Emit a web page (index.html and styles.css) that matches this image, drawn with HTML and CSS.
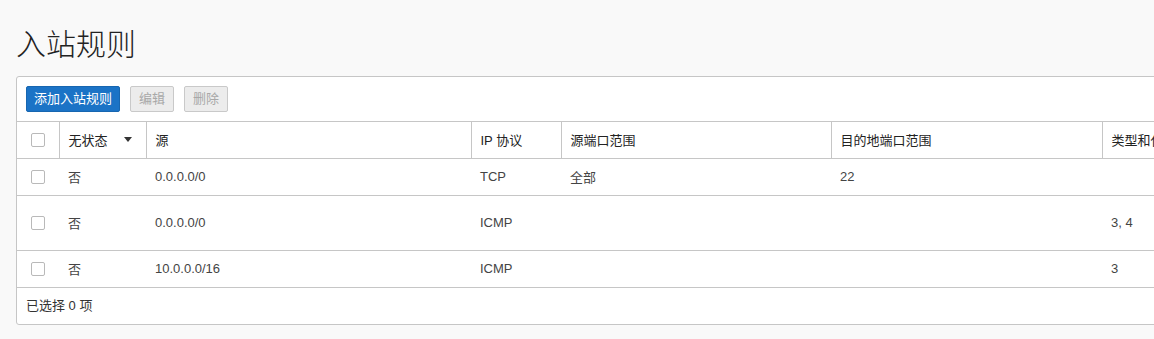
FILE: index.html
```html
<!DOCTYPE html>
<html lang="zh-CN">
<head>
<meta charset="utf-8">
<title>入站规则</title>
<link rel="stylesheet" href="styles.css">
</head>
<body>
<div class="page">
  <h1 class="title">入站规则</h1>
  <div class="panel">
    <div class="toolbar">
      <button class="btn btn-primary">添加入站规则</button>
      <button class="btn btn-disabled">编辑</button>
      <button class="btn btn-disabled">删除</button>
    </div>
    <table class="rules">
      <colgroup>
        <col class="c-check"><col class="c-state"><col class="c-src"><col class="c-proto"><col class="c-sport"><col class="c-dport"><col class="c-type">
      </colgroup>
      <thead>
        <tr>
          <th class="cb-cell"><span class="cb"></span></th>
          <th><span class="sort">无状态<span class="caret"></span></span></th>
          <th>源</th>
          <th>IP 协议</th>
          <th>源端口范围</th>
          <th>目的地端口范围</th>
          <th>类型和代码</th>
        </tr>
      </thead>
      <tbody>
        <tr>
          <td class="cb-cell"><span class="cb"></span></td>
          <td>否</td><td>0.0.0.0/0</td><td>TCP</td><td>全部</td><td>22</td><td></td>
        </tr>
        <tr class="tall">
          <td class="cb-cell"><span class="cb"></span></td>
          <td>否</td><td>0.0.0.0/0</td><td>ICMP</td><td></td><td></td><td>3, 4</td>
        </tr>
        <tr>
          <td class="cb-cell"><span class="cb"></span></td>
          <td>否</td><td>10.0.0.0/16</td><td>ICMP</td><td></td><td></td><td>3</td>
        </tr>
      </tbody>
    </table>
    <div class="footer">已选择 0 项</div>
  </div>
</div>
</body>
</html>
```
FILE: styles.css
```css
html, body {
  margin: 0;
  padding: 0;
  background: #f9f9f9;
  overflow: hidden;
}
body {
  font-family: "Liberation Sans", "Noto Sans CJK SC", sans-serif;
  font-size: 13px;
  color: #333;
}
.page {
  padding-left: 16px;
}
.title {
  margin: 24px 0 16px 0;
  font-size: 30px;
  line-height: 36px;
  font-weight: 300;
  color: #222;
  font-family: "Noto Sans CJK SC", sans-serif;
}
.panel {
  width: 1250px;
  background: #fff;
  border: 1px solid #c6c6c6;
  border-radius: 3px;
}
.toolbar {
  display: flex;
  gap: 10px;
  padding: 9px;
  border-bottom: 1px solid #c6c6c6;
}
.btn {
  height: 26px;
  padding: 0;
  border-radius: 2px;
  font-family: "Liberation Sans", "Noto Sans CJK SC", sans-serif;
  font-size: 13px;
  line-height: 24px;
  box-sizing: border-box;
}
.btn-primary {
  background: #1b73c6;
  border: 1px solid #1766b0;
  color: #fff;
  width: 94px;
}
.btn-disabled {
  background: #ececec;
  border: 1px solid #c9c9c9;
  color: #a8a8a8;
  width: 44px;
}
.rules {
  width: 1250px;
  border-collapse: collapse;
  table-layout: fixed;
}
.c-check { width: 42px; }
.c-state { width: 87px; }
.c-src { width: 325px; }
.c-proto { width: 90px; }
.c-sport { width: 270px; }
.c-dport { width: 271px; }
.rules th, .rules td {
  padding: 0 9px;
  text-align: left;
  border-bottom: 1px solid #c6c6c6;
  white-space: nowrap;
  overflow: hidden;
  box-sizing: border-box;
}
.rules th {
  height: 36px;
  font-weight: normal;
  color: #222;
  border-right: 1px solid #c6c6c6;
}
.rules td {
  height: 37px;
  color: #444;
}
.rules tr.tall td {
  height: 55px;
}
.rules .cb-cell {
  padding: 0 0 0 14px;
}
.cb {
  display: block;
  width: 14px;
  height: 14px;
  box-sizing: border-box;
  border: 1px solid #b9b9b9;
  border-radius: 2px;
  background: #fff;
}
.sort {
  display: flex;
  align-items: center;
}
.caret {
  margin-left: 16px;
  width: 0;
  height: 0;
  border-left: 4px solid transparent;
  border-right: 4px solid transparent;
  border-top: 5px solid #333;
}
.footer {
  height: 36px;
  line-height: 36px;
  padding-left: 9px;
  color: #333;
}
```
